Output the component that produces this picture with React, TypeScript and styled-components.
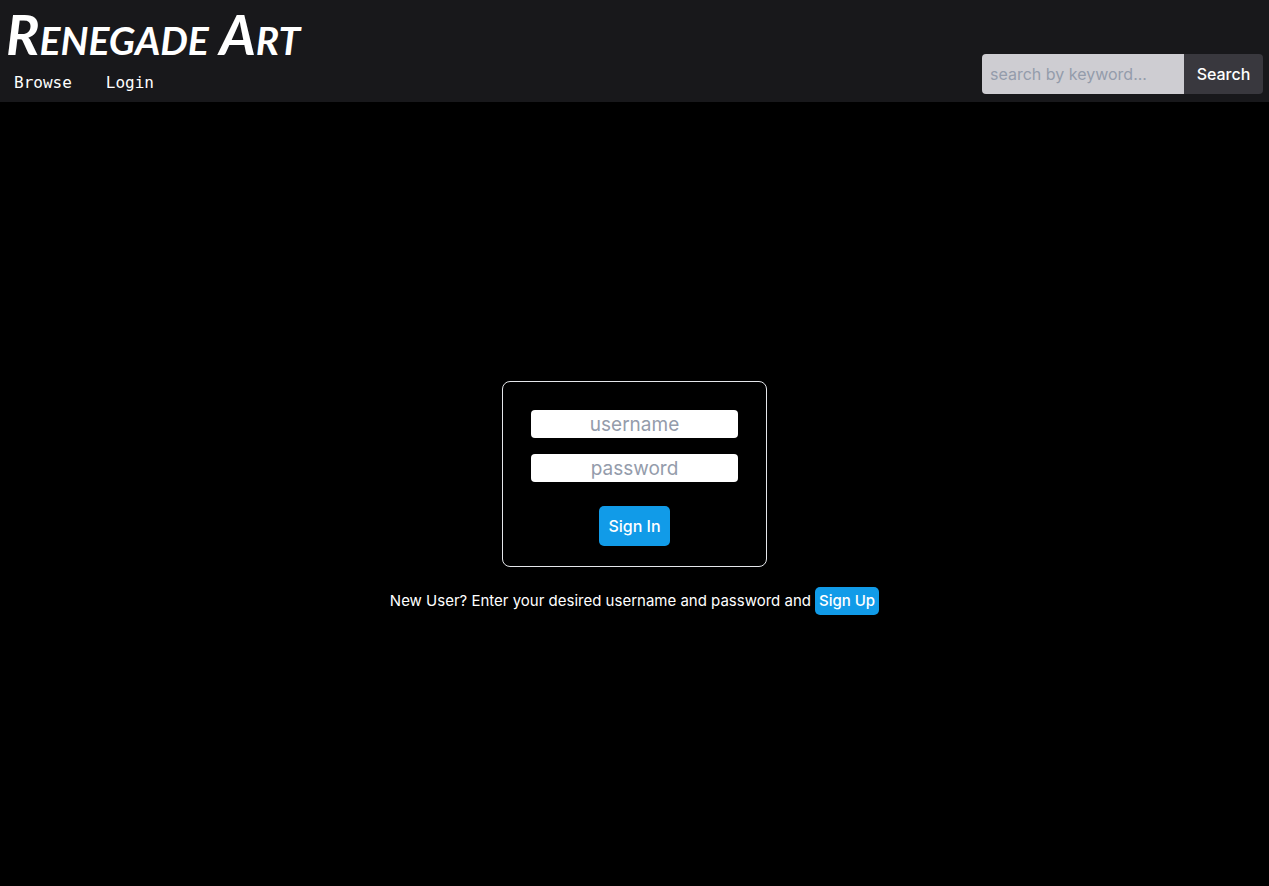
import React, { useState } from "react";
import styled, { createGlobalStyle } from "styled-components";

const sans = `Inter, "Liberation Sans", sans-serif`;

const GlobalStyle = createGlobalStyle`
  *, *::before, *::after { box-sizing: border-box; }
  body { margin: 0; background: #000; color: #fff; font-family: ${sans}; }
  button, input { font: inherit; border: 0; margin: 0; }
`;

const Page = styled.div`
  min-height: 100vh;
  display: flex;
  flex-direction: column;
`;

const Header = styled.header`
  display: flex;
  flex-wrap: wrap;
  justify-content: space-between;
  align-items: flex-end;
  gap: 8px;
  padding: 0 6px 8px;
  background: #18181b;
`;

const Brand = styled.h1`
  margin: 0;
  font-family: Lato, sans-serif;
  font-size: 56px;
  font-style: italic;
  font-weight: 700;
  font-variant: small-caps;
  line-height: 68px;
`;

const Nav = styled.nav`
  display: flex;
  gap: 34px;
  padding: 3px 8px 0;
`;

const NavLink = styled.a`
  color: #fff;
  font-family: "DejaVu Sans Mono", monospace;
  font-size: 16px;
  line-height: 23px;
  text-decoration: none;
`;

const SearchForm = styled.form`
  display: flex;
  height: 40px;
`;

const SearchInput = styled.input`
  width: 202px;
  padding: 0 8px;
  border-radius: 4px 0 0 4px;
  background: #cecdd2;
  color: #18181b;
  font-size: 16px;
  &::placeholder { color: #949cab; opacity: 1; }
`;

const SearchButton = styled.button`
  padding: 0 12px;
  min-width: 79px;
  border-radius: 0 4px 4px 0;
  background: #39383e;
  color: #fff;
  font-size: 16px;
  font-weight: 500;
  cursor: pointer;
`;

const Main = styled.main`
  flex: 1;
  display: flex;
  flex-direction: column;
  justify-content: center;
  align-items: center;
  gap: 20px;
  padding: 8px 8px 0;
`;

const LoginCard = styled.form`
  display: flex;
  flex-direction: column;
  align-items: center;
  gap: 16px;
  padding: 28px 28px 20px;
  border: 1px solid #e5e7eb;
  border-radius: 8px;
`;

const Field = styled.input`
  width: 207px;
  height: 28px;
  padding: 0 4px;
  border-radius: 4px;
  background: #fff;
  color: #18181b;
  font-size: 19px;
  text-align: center;
  &::placeholder { color: #949cab; opacity: 1; }
`;

const ActionButton = styled.button<{ $small?: boolean }>`
  height: ${(p) => (p.$small ? 28 : 40)}px;
  min-width: ${(p) => (p.$small ? 64 : 71)}px;
  margin-top: ${(p) => (p.$small ? 0 : 8)}px;
  padding: 0 4px;
  border-radius: 5px;
  background: #119be8;
  color: #fff;
  font-size: ${(p) => (p.$small ? 15 : 16)}px;
  font-weight: 500;
  white-space: nowrap;
  cursor: pointer;
`;

const SignUpLine = styled.div`
  display: flex;
  align-items: center;
  gap: 4px;
  font-size: 15px;
  line-height: 20px;
`;

export default function App() {
  const [keyword, setKeyword] = useState("");
  const [username, setUsername] = useState("");
  const [password, setPassword] = useState("");
  const stay = (e: React.FormEvent) => e.preventDefault();

  return (
    <Page>
      <GlobalStyle />
      <Header>
        <div>
          <Brand>Renegade Art</Brand>
          <Nav>
            <NavLink href="#browse">Browse</NavLink>
            <NavLink href="#login">Login</NavLink>
          </Nav>
        </div>
        <SearchForm onSubmit={stay} role="search">
          <SearchInput
            aria-label="search by keyword"
            placeholder="search by keyword..."
            value={keyword}
            onChange={(e) => setKeyword(e.target.value)}
          />
          <SearchButton type="submit">Search</SearchButton>
        </SearchForm>
      </Header>
      <Main>
        <LoginCard id="login-form" onSubmit={stay}>
          <Field
            aria-label="username"
            placeholder="username"
            value={username}
            onChange={(e) => setUsername(e.target.value)}
          />
          <Field
            type="password"
            aria-label="password"
            placeholder="password"
            value={password}
            onChange={(e) => setPassword(e.target.value)}
          />
          <ActionButton type="submit">Sign In</ActionButton>
        </LoginCard>
        <SignUpLine>
          <span>New User? Enter your desired username and password and</span>
          <ActionButton $small type="button">Sign Up</ActionButton>
        </SignUpLine>
      </Main>
    </Page>
  );
}
